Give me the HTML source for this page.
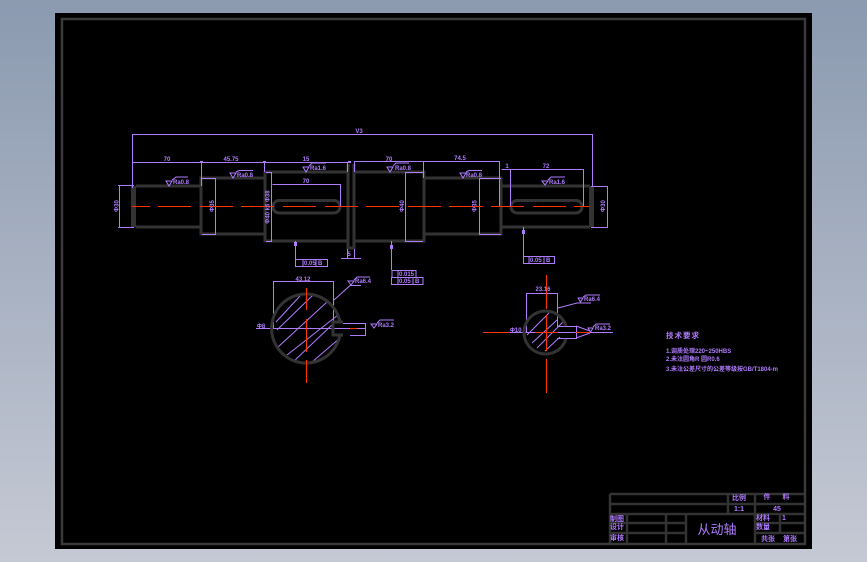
<!DOCTYPE html>
<html><head><meta charset="utf-8"><style>
html,body{margin:0;padding:0;width:867px;height:562px;overflow:hidden;background:linear-gradient(#8b9ab0,#c5c9d4)}
svg{position:absolute;left:0;top:0}
text{font-family:"Liberation Sans","Noto Sans CJK SC",sans-serif;fill:#b07cff;font-weight:bold}
</style></head><body>
<svg width="867" height="562" viewBox="0 0 867 562" xmlns="http://www.w3.org/2000/svg">
<rect x="55" y="13" width="757" height="536" fill="#000"/>
<rect x="62" y="19" width="743" height="525" fill="none" stroke="#3a3a3a" stroke-width="2.5"/>
<g fill="none" stroke="#333" stroke-width="3">
<path d="M136 186H201V178H265V172H348M354 172H424V178H501V186H590M136 227H201V234H265V241H348M354 241H424V234H501V227H590"/>
<path d="M201 178V234M265 172V241M424 178V234M501 178V234M348 164V248H354V164"/>
<rect x="273" y="200.500" width="67" height="12.500" rx="6"/>
<rect x="511" y="200.500" width="71" height="12.500" rx="6"/>
</g>
<rect x="131" y="186" width="5" height="41" fill="#333"/>
<rect x="589" y="186" width="5" height="41" fill="#333"/>
<g fill="none" stroke="#b07cff" stroke-width="1" shape-rendering="crispEdges">
<path d="M132.500 134.500H592.500V186M132.500 134V188M132 162.500H347.500V172M201.500 162V186M264.500 162V172M354.500 161.500H499.500V206M354.500 161V172M423.500 161V178M501.500 169.500H583.500V206M510.500 169.500V206"/>
<path d="M118 185.500H134M119.500 185.500V227.500M118 227.500H134M202 178.500H215.500V234.500H202M266 172.500H271.500V241.500H266M272.500 184.500H340.500V206"/>
<path d="M423 172.500H405.500V241.500H423M501 178.500H479.500V234.500H501M591 186.500H607.500V227.500H591"/>
<path d="M295.500 241V259M295.500 259.500H327.500V266.500H295.500ZM303 259V266M316 259V266"/>
<path d="M347.500 249V258M354.500 249V258M341 258.500H361"/>
<path d="M391.500 241V270M392 270.500H416V277.500H392ZM391.500 277.500H423V284.500H391.500ZM398 270V277M398 277V284M413 277V284"/>
<path d="M523.500 227V256M523.500 256.500H554.500V263.500H523.500ZM529 256V263M544 256V263"/>
<path d="M273.500 281.500H333.500V326M273.500 281V328"/>
<path d="M256 328.500H365M343 323.500H365.500V335.500H350"/>
<path d="M526.500 293.500H557.500V326M526.500 293V332M510 332.500H613M557 326.500H576.500V338.500H557"/>
</g>
<g fill="none" stroke="#b07cff" stroke-width="1">
<path d="M166 181H172L169 186ZM172 180L176 177H188M230 173H236L233 178ZM236 172L239 170.500H253M303 167H309L306 172ZM309 166L312 163H326"/>
<path d="M387 167H393L390 172ZM393 166L396 163H409M460 173H466L463 178ZM466 172L469 170.500H482M542 181H548L545 185ZM548 180L551 177H565"/>
<path d="M334 300L350 285.500H361M348 281H354L351 285ZM354 280L357 277H370M371 324H377L374 328ZM377 323L380 320H394"/>
<path d="M558 308L577 303H591M578 298H583L580.500 302ZM583 297L586 295H600M588 328H593L590.500 332ZM593 327L596 324H610M576 326L590 331M576 338L590 333"/>
</g>
<clipPath id="a"><circle cx="306.500" cy="328.500" r="34"/></clipPath>
<clipPath id="b"><circle cx="546.500" cy="332.500" r="21"/></clipPath>
<g stroke="#b07cff" stroke-width="1" clip-path="url(#a)"><path d="M276 322L300 296M277 330L313 295M278 347L327 302M287 355L338 315M293 362L335 322M312 362L340 338"/></g>
<g stroke="#b07cff" stroke-width="1" clip-path="url(#b)"><path d="M527 335L549 313M532 343L557 320M537 348L563 322M545 351L560 337"/></g>
<g fill="none" stroke="#333" stroke-width="3">
<path d="M343 322H333V335H343"/>
<path d="M340 322A34.500 34.500 0 1 0 340 335"/>
<path d="M566 326A21.500 21.500 0 1 0 566 339"/>
</g>
<g fill="none" stroke="#ff3300" stroke-width="1" shape-rendering="crispEdges">
<path d="M132 206.500H150M158 206.500H191M200 206.500H233M241 206.500H274M283 206.500H316M325 206.500H358M366 206.500H399M408 206.500H441M449 206.500H483M491 206.500H524M533 206.500H566M574 206.500H589"/>
<line x1="306.500" y1="288" x2="306.500" y2="310"/>
<line x1="306.500" y1="319" x2="306.500" y2="352"/>
<line x1="306.500" y1="360" x2="306.500" y2="383"/>
<path d="M350 328.500H357"/>
<path d="M546.500 275V309M546.500 315V351M546.500 359V393M483 332.500H510M535 332.500H558M575 332.500H590"/>
</g>
<g fill="#b07cff">
<rect x="200" y="161" width="3" height="2"/><rect x="263" y="161" width="3" height="2"/><rect x="348" y="161" width="3" height="2"/>
<rect x="294" y="242" width="3" height="4"/><rect x="390" y="245" width="3" height="4"/><rect x="522" y="230" width="3" height="4"/>
</g>
<g font-size="6">
<text x="359" y="133" text-anchor="middle">V3</text>
<text x="167" y="161" text-anchor="middle">70</text>
<text x="231" y="161" text-anchor="middle">45.75</text>
<text x="306" y="161" text-anchor="middle">15</text>
<text x="389" y="161" text-anchor="middle">70</text>
<text x="460" y="160" text-anchor="middle">74.5</text>
<text x="507" y="168" text-anchor="middle">1</text>
<text x="546" y="168" text-anchor="middle">72</text>
<text x="306" y="183" text-anchor="middle">70</text>
<text x="349" y="256" text-anchor="middle">5</text>
<text x="173" y="184">Ra0.8</text><text x="237" y="177">Ra0.8</text><text x="310" y="170">Ra1.6</text>
<text x="395" y="170">Ra0.8</text><text x="466" y="177">Ra0.8</text><text x="549" y="184">Ra1.6</text>
<text x="355" y="283">Ra6.4</text><text x="378" y="327">Ra3.2</text><text x="584" y="301">Ra6.4</text><text x="595" y="330">Ra3.2</text>
<text x="303" y="281" text-anchor="middle">43.12</text>
<text x="543" y="291" text-anchor="middle">23.16</text>
<text x="257" y="328">Φ8</text><text x="510" y="332">Φ10</text>
<text x="304" y="265">0.05</text><text x="318" y="265">B</text>
<text x="399" y="276">0.015</text><text x="399" y="283">0.05</text><text x="415" y="283">B</text>
<text x="530" y="262">0.05</text><text x="546" y="262">B</text>
<text x="118.500" y="206" transform="rotate(-90 118.500 206)" text-anchor="middle">Φ30</text>
<text x="214" y="206" transform="rotate(-90 214 206)" text-anchor="middle">Φ35</text>
<text x="269.500" y="207" transform="rotate(-90 269.500 207)" text-anchor="middle">Φ40 k6 Φ38</text>
<text x="404" y="206" transform="rotate(-90 404 206)" text-anchor="middle">Φ40</text>
<text x="476.500" y="206" transform="rotate(-90 476.500 206)" text-anchor="middle">Φ35</text>
<text x="605" y="206" transform="rotate(-90 605 206)" text-anchor="middle">Φ30</text>
</g>
<g fill="none" stroke="#333" stroke-width="2.500">
<path d="M610 494H804M610 494V543M728 494V514M755 494V543M610 504H804M610 514H804M610 523H686M610 533H686M755 523H804M755 533H804M627 514V543M666 514V543M686 514V543M780 514V533"/>
</g>
<g font-size="7">
<text x="739" y="500" text-anchor="middle">比例</text>
<text x="767" y="499" text-anchor="middle">件</text><text x="786" y="499" text-anchor="middle">料</text>
<text x="739" y="511" text-anchor="middle">1:1</text><text x="777" y="511" text-anchor="middle">45</text>
<text x="617" y="521" text-anchor="middle">制图</text><text x="617" y="529" text-anchor="middle">设计</text><text x="617" y="540" text-anchor="middle">审核</text>
<text x="763" y="520" text-anchor="middle">材料</text><text x="784" y="520" text-anchor="middle">1</text><text x="763" y="529" text-anchor="middle">数量</text>
<text x="768" y="541" text-anchor="middle">共张</text><text x="790" y="541" text-anchor="middle">第张</text>
</g>
<text x="717" y="534" font-size="13" text-anchor="middle" style="font-weight:normal">从动轴</text>
<text x="666" y="338" font-size="7.500" letter-spacing="1">技术要求</text>
<g font-size="6">
<text x="666" y="353">1.调质处理220~250HBS</text>
<text x="666" y="361">2.未注圆角R 圆R0.6</text>
<text x="666" y="371">3.未注公差尺寸的公差等级按GB/T1804-m</text>
</g>
</svg>
</body></html>
